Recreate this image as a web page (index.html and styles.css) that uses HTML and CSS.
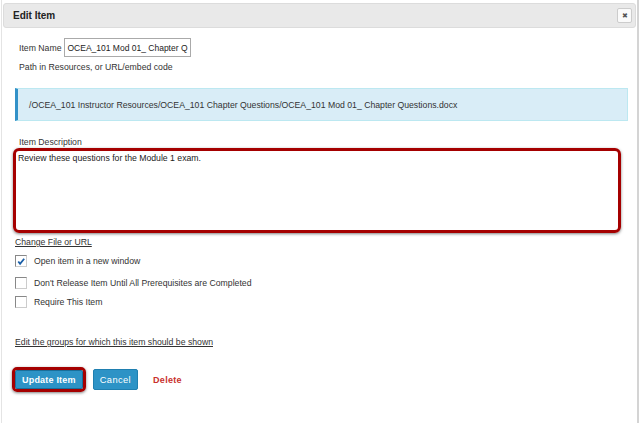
FILE: index.html
```html
<!DOCTYPE html>
<html>
<head>
<meta charset="utf-8">
<link rel="stylesheet" href="styles.css">
</head>
<body>
<div class="dialog">
  <div class="titlebar">
    <span class="title">Edit Item</span>
    <span class="close">&#x2716;</span>
  </div>
  <div class="content">
    <div class="row name-row">
      <span class="lbl">Item Name</span>
      <span class="input">OCEA_101 Mod 01_ Chapter Q</span>
    </div>
    <div class="row path-lbl">Path in Resources, or URL/embed code</div>
    <div class="alert">/OCEA_101 Instructor Resources/OCEA_101 Chapter Questions/OCEA_101 Mod 01_ Chapter Questions.docx</div>
    <div class="desc-lbl">Item Description</div>
    <div class="textarea">Review these questions for the Module 1 exam.</div>
    <a class="link change">Change File or URL</a>
    <div class="checks">
      <label class="check first"><span class="box checked"><svg viewBox="0 0 11 11" width="11" height="11"><path d="M2.5 5.5 L4.5 8 L9 2.5" fill="none" stroke="#1a5fa8" stroke-width="2"/></svg></span>Open item in a new window</label>
      <label class="check second"><span class="box"></span>Don't Release Item Until All Prerequisites are Completed</label>
      <label class="check third"><span class="box"></span>Require This Item</label>
    </div>
    <a class="link groups">Edit the groups for which this item should be shown</a>
    <div class="buttons">
      <span class="hl"><span class="btn">Update Item</span></span>
      <span class="btn cancel">Cancel</span>
      <span class="del">Delete</span>
    </div>
  </div>
</div>
</body>
</html>
```
FILE: styles.css
```css
html, body { margin: 0; padding: 0; background: #fff; }
body { font-family: "Liberation Sans", Arial, sans-serif; font-size: 8.7px; line-height: 10px; color: #333; width: 640px; height: 423px; overflow: hidden; }
.dialog { position: relative; height: 423px; border-left: 1px solid #e4e4e4; border-right: 2px solid #d4d4d4; margin: 0 1px 0 1px; box-sizing: border-box; padding-top: 3px; }
.titlebar { margin: 0 1px 0 1px; height: 25px; box-sizing: border-box; background: #e9e9e9; border: 1px solid #dcdcdc; border-radius: 3px; display: flex; align-items: center; justify-content: space-between; padding: 0 3px 0 9px; }
.title { font-weight: bold; font-size: 10px; color: #222; }
.close { width: 13px; height: 13px; background: #fafafa; border: 1px solid #ccc; border-radius: 2px; font-size: 7px; color: #555; display: flex; align-items: center; justify-content: center; }
.content { padding: 10px 0 0 12px; }
.row { display: flex; align-items: center; }
.name-row { padding-left: 5px; gap: 3px; }
.input { border: 1px solid #aaa; height: 19px; width: 127px; box-sizing: border-box; display: flex; align-items: center; padding-left: 2px; color: #222; font-size: 8.5px; white-space: nowrap; overflow: hidden; }
.path-lbl { padding-left: 5px; margin-top: 5px; }
.alert { margin-top: 16px; margin-left: 1px; width: 613px; box-sizing: border-box; height: 33px; background: #d9edf7; border: 1px solid #bce8f1; border-left: 3px solid #3291c8; padding: 0 0 0 11px; display: flex; align-items: center; color: #333; }
.desc-lbl { margin-top: 16px; padding-left: 5px; }
.textarea { margin-top: 1px; margin-left: -1px; width: 608px; height: 85px; box-sizing: border-box; border: 3px solid #a50000; border-radius: 6px; box-shadow: 0 1px 3px rgba(0,0,0,0.5); padding: 2px 2px; color: #222; }
.link { display: block; color: #333; text-decoration: underline; margin-left: 1px; }
.change { margin-top: 4px; }
.checks { margin-top: 8px; margin-left: 1px; display: flex; flex-direction: column; }
.check { display: flex; align-items: center; gap: 7px; height: 12px; }
.second { margin-top: 10px; }
.third { margin-top: 7px; }
.box { width: 10px; height: 10px; border: 1px solid #888; border-right-color: #ccc; border-bottom-color: #ccc; background: #fff; display: flex; align-items: center; justify-content: center; }
.box svg { display: block; }
.groups { margin-top: 29px; }
.buttons { margin-top: 20px; margin-left: -2px; display: flex; align-items: center; }
.hl { border: 3px solid #a50000; border-radius: 5px; box-shadow: 0 1px 3px rgba(0,0,0,0.5); display: flex; }
.btn { background: #2d93c6; border: 1px solid #1f7fb0; color: #fff; font-weight: bold; font-size: 9px; height: 19px; box-sizing: border-box; padding: 0 6px; display: flex; align-items: center; border-radius: 2px; letter-spacing: 0.2px; }
.hl .btn { border-color: #1a6e99; }
.cancel { margin-left: 7px; height: 21px; font-weight: normal; font-size: 9.3px; letter-spacing: 0.4px; padding: 0 6px; }
.del { color: #c9302c; font-weight: bold; font-size: 9px; margin-left: 15px; letter-spacing: 0.3px; }
```
